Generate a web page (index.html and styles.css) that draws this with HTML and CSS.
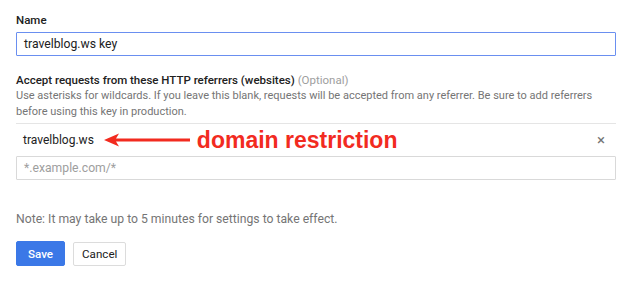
FILE: index.html
```html
<!DOCTYPE html>
<html>
<head>
<meta charset="utf-8">
<link rel="stylesheet" href="styles.css">
</head>
<body>
<div class="form">
  <div class="label">Name</div>
  <div class="input active">travelblog.ws key</div>

  <div class="label section">Accept requests from these HTTP referrers (websites) <span class="optional">(Optional)</span></div>
  <div class="help">Use asterisks for wildcards. If you leave this blank, requests will be accepted from any referrer. Be sure to add referrers before using this key in production.</div>

  <div class="referrer-row">
    <span class="referrer">travelblog.ws</span>
    <svg class="arrow" width="88" height="16" viewBox="0 0 88 16">
      <path d="M0 8 L15 1.5 L12 6.5 L86 6.5 L86 9.5 L12 9.5 L15 14.5 Z" fill="#f22b1f"/>
    </svg>
    <span class="annot">domain restriction</span>
    <span class="close">×</span>
  </div>
  <div class="input placeholder">*.example.com/*</div>

  <div class="note">Note: It may take up to 5 minutes for settings to take effect.</div>

  <div class="buttons">
    <button class="btn primary">Save</button>
    <button class="btn">Cancel</button>
  </div>
</div>
</body>
</html>
```
FILE: styles.css
```css
html, body {
  margin: 0;
  padding: 0;
  background: #fff;
}
body {
  font-family: Roboto, "Noto Sans", sans-serif;
  color: #212121;
}
.form {
  padding: 12px 0 0 16px;
  width: 600px;
}
.label {
  font-size: 11.5px;
  font-weight: 500;
  line-height: 16px;
  color: #212121;
}
.label.section {
  margin-top: 16px;
}
.optional {
  font-weight: 400;
  color: #9e9e9e;
}
.input {
  box-sizing: border-box;
  height: 24px;
  margin-top: 4px;
  border: 1px solid #d9d9d9;
  border-radius: 1px;
  padding: 0 7px;
  font-size: 12.2px;
  line-height: 22px;
}
.input.active {
  border-color: #6a8ff0;
  color: #212121;
}
.placeholder {
  margin-top: 0;
  color: #9e9e9e;
}
.help {
  font-size: 11px;
  line-height: 16px;
  color: #757575;
  padding-bottom: 3px;
  border-bottom: 1px solid #e5e5e5;
}
.referrer-row {
  display: flex;
  align-items: center;
  height: 32px;
  padding-left: 7px;
}
.referrer {
  font-size: 12px;
  color: #212121;
}
.arrow {
  margin-left: 10px;
  flex: none;
}
.annot {
  margin-left: 5px;
  font-family: "Liberation Sans", Arial, sans-serif;
  font-weight: 700;
  font-size: 23px;
  color: #f22b1f;
}
.close {
  margin-left: auto;
  margin-right: 11px;
  font-size: 15px;
  color: #757575;
}
.note {
  margin-top: 31px;
  font-size: 12.2px;
  line-height: 16px;
  color: #757575;
}
.buttons {
  display: flex;
  align-items: center;
  gap: 8px;
  margin-top: 14px;
}
.btn {
  font-family: Roboto, "Noto Sans", sans-serif;
  font-size: 11.6px;
  height: 24px;
  padding: 0 8px;
  border: 1px solid #dcdcdc;
  border-radius: 2px;
  background: #fff;
  color: #212121;
}
.btn.primary {
  background: #3b78e7;
  border-color: #3b78e7;
  color: #fff;
  font-weight: 500;
  height: 25px;
  padding: 0 11px;
}
```
